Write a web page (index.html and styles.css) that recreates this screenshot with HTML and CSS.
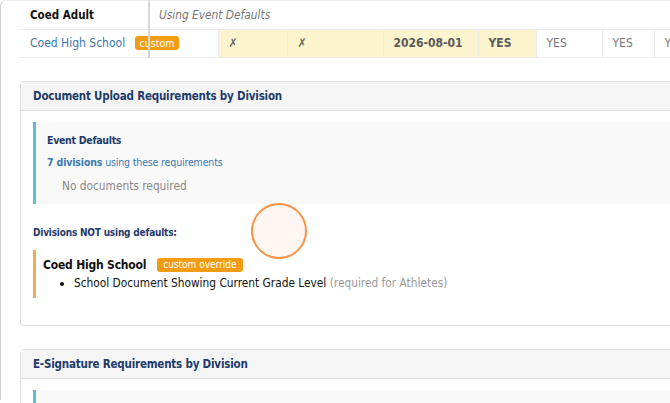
FILE: index.html
```html
<!DOCTYPE html>
<html>
<head>
  <meta charset="UTF-8">
  <link rel="stylesheet" href="styles.css">
</head>
<body>
  <div class="frame">
    <div class="table-wrap">
      <table class="division-table">
        <colgroup>
          <col style="width: 128px">
          <col style="width: 70px">
          <col style="width: 69px">
          <col style="width: 96px">
          <col style="width: 95px">
          <col style="width: 58px">
          <col style="width: 66px">
          <col style="width: 52px">
          <col style="width: 60px">
        </colgroup>
        <tr class="row-default">
          <td class="name-cell strong">Coed Adult</td>
          <td class="defaults-cell" colspan="8">Using Event Defaults</td>
        </tr>
        <tr class="row-custom">
          <td class="name-cell" colspan="2">
            <a class="link">Coed High School</a>
            <span class="badge">custom</span>
          </td>
          <td class="cell changed mark">&#x2717;</td>
          <td class="cell changed mark">&#x2717;</td>
          <td class="cell changed bold">2026-08-01</td>
          <td class="cell changed bold">YES</td>
          <td class="cell">YES</td>
          <td class="cell">YES</td>
          <td class="cell">YES</td>
        </tr>
      </table>
      <div class="sticky-edge"></div>
    </div>

    <div class="panel">
      <div class="panel-heading">Document Upload Requirements by Division</div>
      <div class="panel-body">
        <div class="defaults-box">
          <div class="box-title">Event Defaults</div>
          <div class="box-usage"><strong>7 divisions</strong> using these requirements</div>
          <div class="box-empty">No documents required</div>
        </div>

        <div class="section-label">Divisions NOT using defaults:</div>

        <div class="override-box">
          <div class="override-title">
            <span>Coed High School</span>
            <span class="badge">custom override</span>
          </div>
          <ul class="doc-list">
            <li>School Document Showing Current Grade Level <span class="muted">(required for Athletes)</span></li>
          </ul>
        </div>
      </div>
    </div>

    <div class="panel">
      <div class="panel-heading">E-Signature Requirements by Division</div>
      <div class="panel-body">
        <div class="defaults-box"></div>
      </div>
    </div>

    <div class="click-ring"></div>
  </div>
</body>
</html>
```

FILE: styles.css
```css
* {
  margin: 0;
  padding: 0;
  box-sizing: border-box;
}

body {
  width: 670px;
  height: 403px;
  overflow: hidden;
  font-family: "DejaVu Sans Condensed", "DejaVu Sans", sans-serif;
  font-size: 12px;
  color: #111111;
  background: #ffffff;
}

.frame {
  position: relative;
  width: 740px;
  height: 400px;
  padding-left: 19px;
  border-left: 1px solid #cfcfcf;
  border-top: 1px solid #ececec;
  border-top-left-radius: 6px;
}

/* Division table */
.table-wrap {
  position: relative;
}

.division-table {
  table-layout: fixed;
  border-collapse: collapse;
  width: 694px;
}

.division-table td {
  height: 28px;
  padding: 0 10px;
  border-bottom: 1px solid #ebebeb;
  white-space: nowrap;
  overflow: hidden;
  vertical-align: middle;
}

.strong {
  font-weight: bold;
  font-size: 11.5px;
  color: #111111;
}

.defaults-cell {
  font-style: italic;
  font-size: 11.8px;
  color: #777777;
  padding-left: 11px !important;
}

.link {
  color: #3a78ad;
  text-decoration: none;
}

.badge {
  display: inline-block;
  margin-left: 6px;
  padding: 1px 5px;
  background: #f39c12;
  color: #ffffff;
  font-size: 10.5px;
  border-radius: 3px;
  line-height: 12px;
}

.row-custom .cell {
  border-left: 1px solid #ececec;
  color: #777777;
}

.cell.changed {
  background: #fcf4cd;
}

.cell.mark {
  color: #666666;
}

.cell.bold {
  font-weight: bold;
  color: #5a5a5a;
}

.sticky-edge {
  position: absolute;
  left: 128px;
  top: -1px;
  width: 2px;
  height: 58px;
  background: #d3d7de;
}

/* Panels */
.panel {
  margin-top: 23px;
  border: 1px solid #dddddd;
  border-radius: 4px;
  background: #ffffff;
}

.panel-heading {
  height: 29px;
  padding: 0 12px;
  display: flex;
  align-items: center;
  background: #f5f5f5;
  border-bottom: 1px solid #dddddd;
  font-size: 11.5px;
  letter-spacing: -0.2px;
  font-weight: bold;
  color: #1d3a6b;
}

.panel-body {
  padding: 11px 12px 27px;
}

.defaults-box {
  min-height: 82px;
  padding: 11px 11px 9px;
  background: #f9f9f9;
  border-left: 3px solid #5bc0de;
}

.box-title {
  font-size: 10.5px;
  letter-spacing: -0.3px;
  font-weight: bold;
  color: #1d3a6b;
  line-height: 14px;
}

.box-usage {
  margin-top: 8px;
  font-size: 10.5px;
  letter-spacing: -0.15px;
  line-height: 14px;
  color: #3a78ad;
}

.box-empty {
  margin-top: 10px;
  padding-left: 15px;
  font-size: 11.8px;
  line-height: 14px;
  color: #888888;
}

.section-label {
  margin-top: 22px;
  font-size: 10px;
  letter-spacing: -0.2px;
  font-weight: bold;
  color: #1d3a6b;
  line-height: 14px;
}

.override-box {
  margin-top: 10px;
  padding: 7px 7px 7px;
  border-left: 3px solid #f0ad4e;
}

.override-title {
  display: flex;
  align-items: center;
  gap: 5px;
  font-size: 12px;
  letter-spacing: -0.2px;
  font-weight: bold;
  line-height: 16px;
}

.override-title .badge {
  font-weight: normal;
  font-size: 10px;
  letter-spacing: 0;
  padding: 1px 6px;
  line-height: 12px;
}

.doc-list {
  margin-top: 3px;
  padding-left: 31px;
  font-size: 11.8px;
  line-height: 15px;
}

.muted {
  color: #999999;
}

/* Click indicator */
.click-ring {
  position: absolute;
  left: 250px;
  top: 202px;
  width: 56px;
  height: 56px;
  border: 2px solid #f7944a;
  border-radius: 50%;
  background: rgba(255, 240, 232, 0.6);
}
```
